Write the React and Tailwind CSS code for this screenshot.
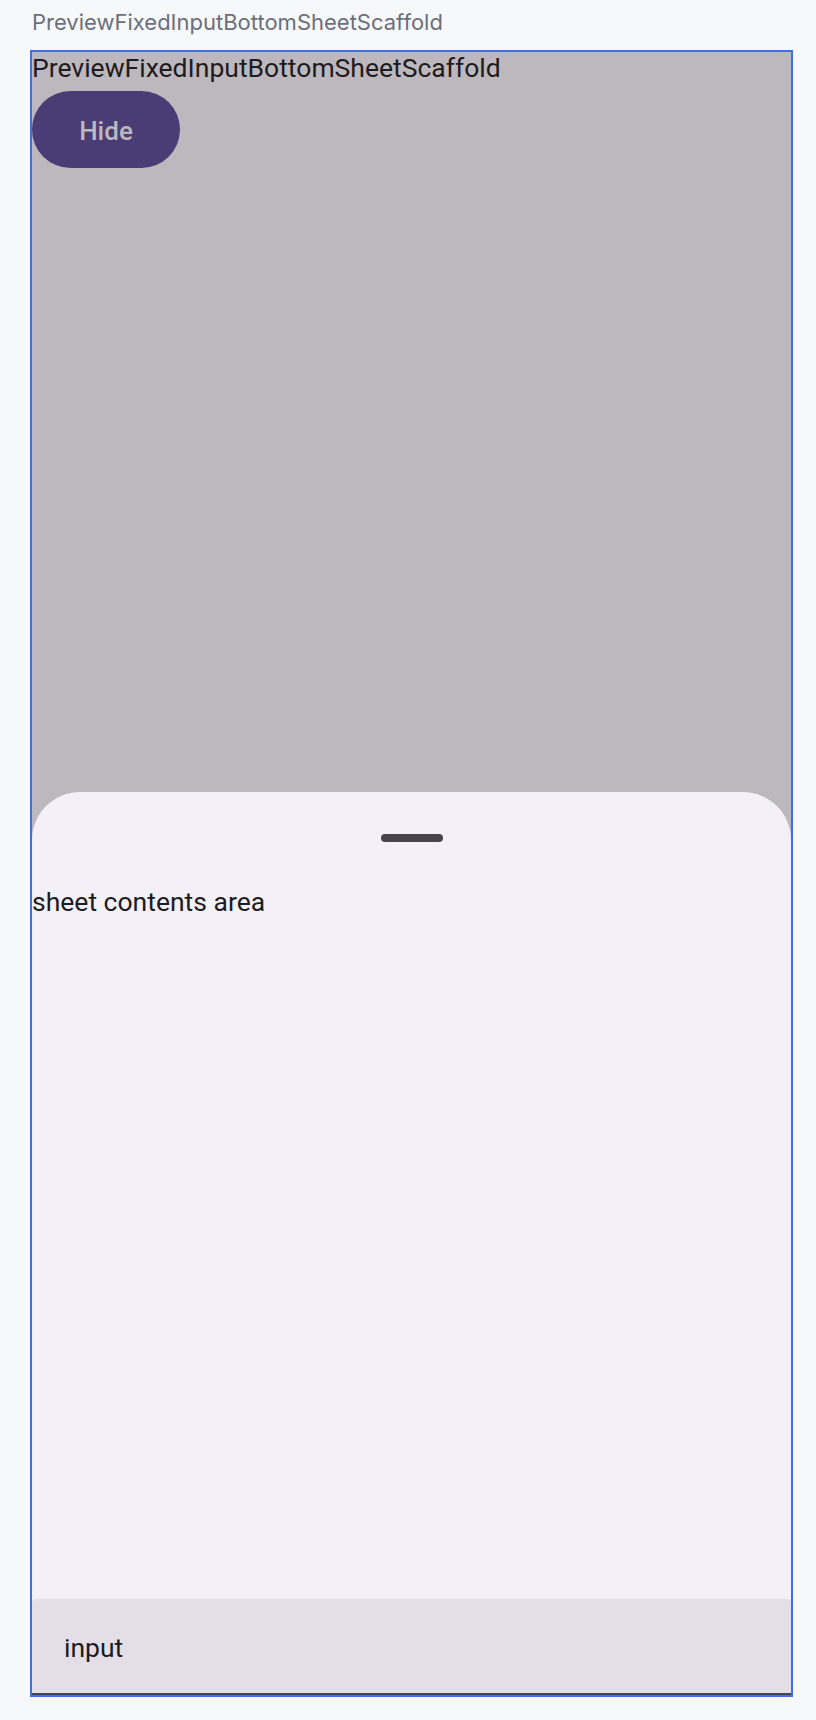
export default function App() {
  return (
    <div className="min-h-[1720px] bg-[#f7f8fa] font-['Roboto',sans-serif]">
      <div className="pl-[32px] pt-[8px] h-[50px] text-[22px] leading-[28px] text-[#6b6f7b] font-['Inter',sans-serif]">
        PreviewFixedInputBottomSheetScaffold
      </div>
      <div className="ml-[30px] w-[763px] h-[1647px] border-2 border-[#3f6ee6] bg-[#bdb8bd] flex flex-col">
        <div className="h-[740px] shrink-0">
          <div className="text-[26.5px] leading-[32px] text-[#1d1b20]">PreviewFixedInputBottomSheetScaffold</div>
          <button className="mt-[7px] w-[148px] h-[77px] pt-[4px] rounded-full bg-[#4a3c74] text-[#bdb8bd] text-[26px] font-medium">
            Hide
          </button>
        </div>
        <div className="flex-1 flex flex-col bg-[#f3f1f7] rounded-t-[48px]">
          <div className="flex justify-center pt-[42px]">
            <div className="w-[62px] h-[8px] rounded-full bg-[#49454f]" />
          </div>
          <div className="mt-[44px] text-[26.5px] leading-[32px] text-[#1d1b20]">sheet contents area</div>
          <div className="flex-1" />
          <div className="h-[96px] pt-[4px] bg-[#e4dfe7] rounded-t-[4px] border-b-2 border-[#49454f] flex items-center pl-[32px] text-[26.5px] text-[#1d1b20]">
            input
          </div>
        </div>
      </div>
    </div>
  );
}
